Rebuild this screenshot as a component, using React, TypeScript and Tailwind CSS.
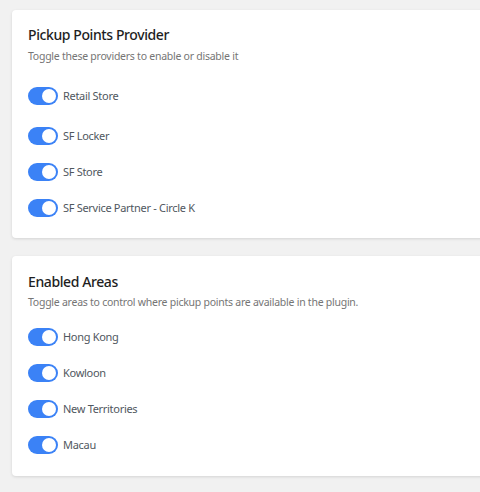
import React from "react";

const providers = ["Retail Store", "SF Locker", "SF Store", "SF Service Partner - Circle K"];
const areas = ["Hong Kong", "Kowloon", "New Territories", "Macau"];

function Toggle() {
  return (
    <div className="flex h-[18px] w-[30px] shrink-0 items-center justify-end rounded-full bg-[#3b82f6] pr-[2px]">
      <div className="h-[14px] w-[14px] rounded-full bg-white" />
    </div>
  );
}

function Row({ label, extra }: { label: string; extra?: boolean }) {
  return (
    <div className={`flex items-center gap-[5px] ${extra ? "mb-[4px]" : ""}`}>
      <Toggle />
      <span className="text-[11px] leading-[18px] tracking-[-0.3px] text-[#50575e]">{label}</span>
    </div>
  );
}

export default function App() {
  return (
    <div
      className="min-h-screen w-[480px] overflow-hidden bg-[#f1f1f1] pl-[12px] pt-[10px]"
      style={{ fontFamily: '"Noto Sans", sans-serif' }}
    >
      <div className="flex w-[520px] flex-col gap-[18px]">
        {/* PROVIDERS */}
        <div className="rounded-[4px] bg-white px-4 pb-[21px] pt-[15px] shadow-[0_1px_3px_rgba(0,0,0,0.12)]">
          <h2 className="text-[14px] font-medium leading-[20px] tracking-[-0.4px] text-[#1e1e1e]">
            Pickup Points Provider
          </h2>
          <p className="mt-[3px] text-[10.5px] leading-[16px] tracking-[-0.25px] text-[#757575]">
            Toggle these providers to enable or disable it
          </p>
          <div className="mt-[23px] flex flex-col gap-[18px]">
            {providers.map((p, i) => (
              <Row key={p} label={p} extra={i === 0} />
            ))}
          </div>
        </div>

        {/* AREAS */}
        <div className="rounded-[4px] bg-white px-4 pb-[22px] pt-[16px] shadow-[0_1px_3px_rgba(0,0,0,0.12)]">
          <h2 className="text-[14px] font-medium leading-[20px] tracking-[-0.4px] text-[#1e1e1e]">Enabled Areas</h2>
          <p className="mt-[2px] text-[10.5px] leading-[16px] tracking-[-0.25px] text-[#757575]">
            Toggle areas to control where pickup points are available in the plugin.
          </p>
          <div className="mt-[18px] flex flex-col gap-[18px]">
            {areas.map((a) => (
              <Row key={a} label={a} />
            ))}
          </div>
        </div>
      </div>
    </div>
  );
}
